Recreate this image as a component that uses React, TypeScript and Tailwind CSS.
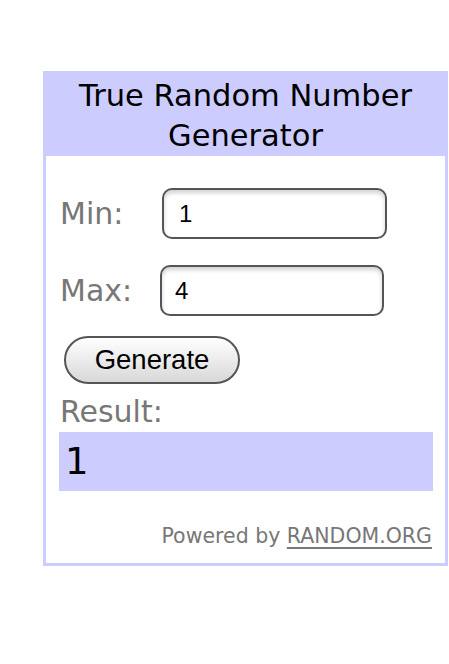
import { useState } from 'react';

export default function App() {
  const [min, setMin] = useState('1');
  const [max, setMax] = useState('4');
  const [result, setResult] = useState(1);

  const generate = () => {
    const lo = parseInt(min, 10) || 0;
    const hi = parseInt(max, 10) || 0;
    setResult(Math.floor(Math.random() * (hi - lo + 1)) + lo);
  };

  const verdana = "font-['DejaVu_Sans',Verdana,sans-serif]";
  const arial = "font-['Liberation_Sans',Arial,sans-serif]";

  return (
    <div className="min-h-screen bg-white pt-[71px] pl-[43px]">
      <div className={`w-[405px] border-[3px] border-t-0 border-[#ccccff] ${verdana}`}>
        {/* header */}
        <div className="bg-[#ccccff] h-[85px] pt-[5px] text-center text-[30.5px] leading-[40px] text-black">
          True Random Number
          <br />
          Generator
        </div>

        <div className="pl-[14px] pr-[12px] pt-[32px] pb-[13px]">
          {/* min */}
          <div className="flex items-center h-[51px]">
            <span className="text-[30px] text-[#777] w-[102px]">Min:</span>
            <input
              value={min}
              onChange={(e) => setMin(e.target.value)}
              className={`w-[225px] h-[51px] px-[15px] text-[24px] text-black border-2 border-[#555] rounded-[10px] outline-none shadow-[inset_0_3px_4px_rgba(0,0,0,0.18)] ${arial}`}
            />
          </div>

          {/* max */}
          <div className="flex items-center h-[51px] mt-[26px]">
            <span className="text-[30px] text-[#777] w-[100px]">Max:</span>
            <input
              value={max}
              onChange={(e) => setMax(e.target.value)}
              className={`w-[224px] h-[51px] px-[13px] text-[24px] text-black border-2 border-[#555] rounded-[10px] outline-none shadow-[inset_0_3px_4px_rgba(0,0,0,0.18)] ${arial}`}
            />
          </div>

          <button
            onClick={generate}
            className={`mt-[20px] ml-[4px] w-[176px] h-[48px] rounded-full border-2 border-[#555] bg-gradient-to-b from-white to-[#d8d8d8] text-[27.5px] text-black ${arial}`}
          >
            Generate
          </button>

          <div className="mt-[10px] text-[30px] leading-[36px] text-[#777]">Result:</div>
          <div className="mt-[2px] -ml-[1px] w-[374px] h-[59px] bg-[#ccccff] pl-[6px] text-[37px] leading-[59px] text-black">
            {result}
          </div>

          <div className="mt-[31px] text-right text-[20.5px] leading-[28px] text-[#777] pr-[1px]">
            Powered by <span className="underline underline-offset-[4px]">RANDOM.ORG</span>
          </div>
        </div>
      </div>
    </div>
  );
}
